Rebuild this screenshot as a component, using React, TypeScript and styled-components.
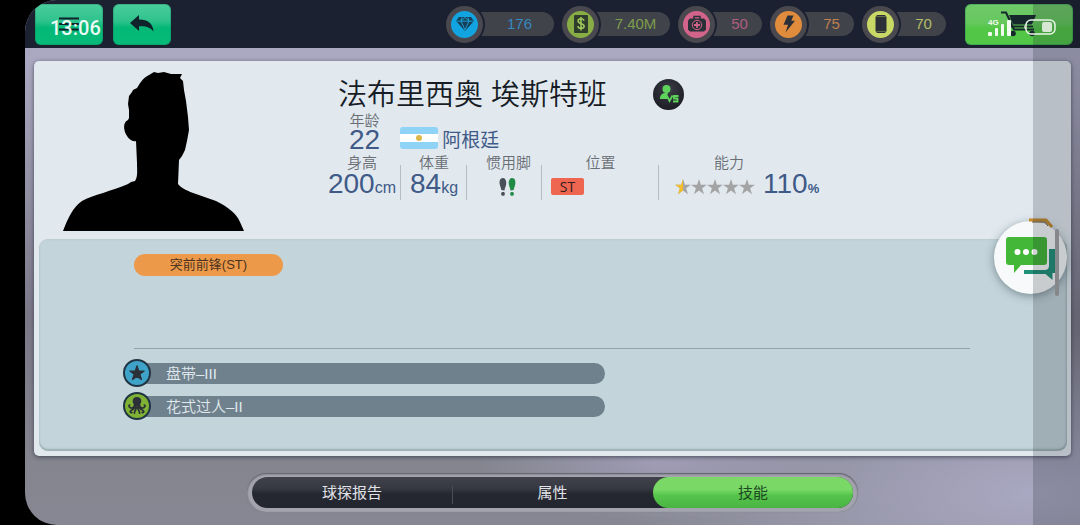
import React, { useState } from 'react';
import styled, { createGlobalStyle, css } from 'styled-components';

const GlobalStyle = createGlobalStyle`
  *, *::before, *::after { box-sizing: border-box; }
  body {
    margin: 0;
    background: #000;
    color: #20242f;
    font-family: "Liberation Sans", "Noto Sans CJK SC", sans-serif;
  }
  button { font: inherit; border: 0; padding: 0; cursor: pointer; }
  h1, dl, dd, dt, ul, p { margin: 0; padding: 0; font-weight: 400; }
  ul { list-style: none; }
  svg { display: block; flex: none; }
`;

const Device = styled.div`
  position: relative;
  min-height: 100vh;
  padding-left: 25px;
  overflow: hidden;
`;

const Screen = styled.div`
  min-height: 100vh;
  border-radius: 32px 0 0 32px;
  overflow: hidden;
  background:
    radial-gradient(ellipse 180px 60px at 60% 88%, rgba(170, 165, 195, 0.7), transparent),
    radial-gradient(ellipse 420px 160px at 96% 94%, rgba(174, 172, 200, 0.9), transparent),
    linear-gradient(180deg, #adabc5 0, #aaa8c0 12%, #7b7888 60%, #84858f 88%, #868792 100%);
`;

const Header = styled.header`
  display: flex;
  align-items: center;
  gap: 10px;
  height: 48px;
  padding: 0 7px 0 10px;
  background: #1c2131;
`;

const HeaderButton = styled.button<{ $width: number; $tone?: 'teal' | 'green' }>`
  display: flex;
  align-items: center;
  justify-content: center;
  width: ${(p) => p.$width}px;
  height: 41px;
  border-radius: 6px;
  color: #10232b;
  background: ${(p) =>
    p.$tone === 'green'
      ? 'linear-gradient(180deg, #6fc968 0, #66c85f 45%, #52c746 60%, #52c648 100%)'
      : 'linear-gradient(180deg, #4bcd9e 0, #2ec28c 42%, #03b876 58%, #07ba79 100%)'};
  box-shadow: inset 0 0 0 1px rgba(20, 120, 80, 0.3);
`;

const Resources = styled.ul`
  display: flex;
  gap: 8px;
  margin-left: auto;
  margin-right: 9px;
`;

const Resource = styled.li<{ $wide?: boolean; $color: string }>`
  display: flex;
  align-items: center;
  width: ${(p) => (p.$wide ? 108 : 84)}px;
  height: 38px;
  color: ${(p) => p.$color};
  font-size: 15px;
`;

const ResourceIcon = styled.span<{ $color: string }>`
  z-index: 1;
  flex: none;
  display: grid;
  place-items: center;
  width: 37px;
  height: 37px;
  border: 5px solid #48484e;
  border-radius: 50%;
  background: ${(p) => p.$color};
  box-shadow: 0 0 0 2px #1c2131;
`;

const ResourceValue = styled.span`
  flex: 1;
  height: 24px;
  line-height: 24px;
  margin-left: -8px;
  padding-left: 10px;
  border-radius: 0 12px 12px 0;
  background: #44464d;
  text-align: center;
  opacity: 0.92;
`;

const Main = styled.main`
  padding: 13px 9px 13px;
`;

const Card = styled.section`
  padding: 0 4px 5px 5px;
  border-radius: 5px;
  background: #e1e9ef;
  box-shadow: 0 1px 4px rgba(40, 45, 60, 0.7);
`;

const Summary = styled.div`
  display: flex;
  gap: 78px;
  height: 178px;
  padding: 11px 0 0 24px;
`;

const Info = styled.div`
  flex: 1;
  min-width: 0;
  padding-top: 4px;
`;

const NameRow = styled.div`
  display: flex;
  align-items: center;
  gap: 46px;
  height: 37px;
  padding-left: 15px;
`;

const Name = styled.h1`
  font-size: 29px;
  line-height: 38px;
  font-weight: 350;
  color: #171c26;
  white-space: nowrap;
`;

const VersusButton = styled.button`
  width: 31px;
  height: 31px;
  border-radius: 50%;
  background: radial-gradient(circle at 50% 35%, #3c3b47, #1d1e26 75%);
`;

const Label = styled.dt`
  font-size: 15px;
  line-height: 16px;
  font-weight: 350;
  color: #6a6e74;
  white-space: nowrap;
`;

const Value = styled.dd`
  display: flex;
  align-items: baseline;
  justify-content: center;
  font-size: 28px;
  line-height: 22px;
  color: #3f5a87;
`;

const Unit = styled.span<{ $small?: boolean }>`
  font-size: ${(p) => (p.$small ? 13 : 16)}px;
  font-weight: ${(p) => (p.$small ? 700 : 400)};
`;

const AgeRow = styled.div`
  display: flex;
  align-items: flex-end;
  gap: 20px;
  height: 38px;
  padding-left: 26px;
`;

const Age = styled.dl`
  text-align: center;
`;

const Nation = styled.div`
  display: flex;
  align-items: center;
  gap: 4px;
  height: 22px;
  margin-bottom: 2px;
  color: #3f5a87;
  font-size: 19px;
`;

const Flag = styled.span`
  display: grid;
  place-items: center;
  width: 38px;
  height: 22px;
  border-radius: 3px;
  background: linear-gradient(180deg, #8fd3f7 0 33%, #fff 33% 67%, #8fd3f7 67%);

  &::after {
    content: "";
    width: 6px;
    height: 6px;
    border-radius: 50%;
    background: #dcb64a;
  }
`;

const Stats = styled.dl`
  display: flex;
  padding-top: 4px;
`;

const Stat = styled.div<{ $width: number; $divided?: boolean }>`
  position: relative;
  width: ${(p) => p.$width}px;
  height: 45px;
  text-align: center;

  & > dd {
    margin-top: 2px;
  }

  ${(p) =>
    p.$divided &&
    css`
      &::after {
        content: "";
        position: absolute;
        right: 0;
        top: 10px;
        bottom: 0;
        width: 1px;
        background: #b3bdc6;
      }
    `}
`;

const FootStat = styled(Stat)`
  padding-left: 8px;
`;

const FootValue = styled.dd`
  display: flex;
  justify-content: center;
  padding: 5px 2px 0 0;
`;

const PositionValue = styled.dd`
  display: flex;
  padding: 5px 0 0 9px;
`;

const PositionTag = styled.span`
  width: 33px;
  height: 17px;
  border-radius: 2px;
  background: #ee6650;
  color: #33201f;
  font-family: "Open Sans", "Noto Sans", sans-serif;
  font-size: 14px;
  line-height: 17px;
`;

const AbilityValue = styled(Value)`
  gap: 8px;
  align-items: center;
  justify-content: flex-start;
  padding-left: 16px;
  white-space: nowrap;
`;

const Panel = styled.div`
  min-height: 212px;
  padding: 15px 97px 30px 95px;
  border-radius: 9px;
  background: #c3d4da;
  box-shadow: inset 0 -2px 2px rgba(120, 145, 145, 0.5), inset -1px 0 2px rgba(120, 145, 155, 0.3);
`;

const RoleArea = styled.div`
  height: 95px;
  border-bottom: 1px solid #93a3aa;
`;

const Role = styled.p`
  width: 149px;
  height: 22px;
  border-radius: 11px;
  background: #ec9a49;
  color: #4d3220;
  font-size: 13px;
  line-height: 22px;
  text-align: center;
`;

const Skills = styled.ul`
  display: grid;
  gap: 5px;
  padding-top: 10px;
`;

const Skill = styled.li`
  display: flex;
  align-items: center;
  width: 471px;
  max-width: 100%;
  height: 28px;
`;

const SkillIcon = styled.span<{ $color: string }>`
  z-index: 1;
  flex: none;
  display: grid;
  place-items: center;
  width: 28px;
  height: 28px;
  margin-left: -11px;
  border: 2px solid #203443;
  border-radius: 50%;
  background: ${(p) => p.$color};
`;

const SkillName = styled.span`
  flex: 1;
  height: 21px;
  margin-left: -10px;
  padding-left: 25px;
  border-radius: 0 11px 11px 0;
  background: #6f818d;
  color: #e0e9ed;
  font-size: 15px;
  font-weight: 350;
  line-height: 21px;
`;

const Tabs = styled.nav`
  display: flex;
  width: 59%;
  height: 39px;
  margin: 17px auto 0;
  padding: 4px 5px;
  border-radius: 20px;
  background: #a3a4ae;
  box-shadow: inset 0 1px 2px #55535f, 0 0 1px #7c7b88;
`;

const TabTrack = styled.div`
  display: flex;
  flex: 1;
  border-radius: 16px;
  background: linear-gradient(180deg, #40414b 0, #383a43 35%, #252730 55%, #232630 100%);
`;

const activeTab = css`
  border-radius: 16px;
  background: linear-gradient(180deg, #7cd867 0, #79d966 40%, #55c44b 60%, #4ab443 100%);
  color: #1d4a20;
`;

const idleTab = css`
  background: transparent;
  color: #e1e2e7;

  &:not(:first-child) {
    background: linear-gradient(#4c4e57, #4c4e57) 0 70% / 1px 18px no-repeat;
  }
`;

const Tab = styled.button<{ $active: boolean }>`
  flex: 1;
  font-size: 15px;
  line-height: 31px;
  ${(p) => (p.$active ? activeTab : idleTab)}
`;

const ChatButton = styled.button`
  position: absolute;
  top: 221px;
  right: 13px;
  display: grid;
  place-items: center;
  width: 73px;
  height: 73px;
  border-radius: 50%;
  background: #f7f9fb;
  box-shadow: 0 2px 8px rgba(50, 70, 80, 0.5);
`;

const HexBadge = styled.svg`
  position: absolute;
  top: 217px;
  right: 26px;
`;

const EdgeShade = styled.div`
  position: absolute;
  inset: 0 0 0 auto;
  width: 47px;
  background: rgba(20, 24, 36, 0.2);
  pointer-events: none;
`;

const ScrollThumb = styled.div`
  position: absolute;
  top: 229px;
  right: 21px;
  width: 4px;
  height: 67px;
  border-radius: 2px;
  background: #85878b;
`;

const Clock = styled.time`
  position: absolute;
  top: 16px;
  left: 50px;
  color: #e9fbf4;
  font-family: Roboto, sans-serif;
  font-size: 20px;
  font-weight: 500;
  line-height: 24px;
  pointer-events: none;
`;

const PhoneStatus = styled.div`
  position: absolute;
  top: 18px;
  right: 24px;
  display: flex;
  align-items: flex-end;
  gap: 11px;
  color: #f2fbf0;
  pointer-events: none;
`;

const Signal = styled.div`
  position: relative;
  width: 24px;
  height: 18px;
`;

const Network = styled.span`
  position: absolute;
  top: 0;
  left: 0;
  font-size: 8px;
  font-weight: 700;
  line-height: 9px;
`;

const ink = '#2b3038';

const starPoints = '8,0 9.9,5.8 16,5.8 11.1,9.3 13,15.2 8,11.6 3,15.2 4.9,9.3 0,5.8 6.1,5.8';

const DiamondIcon = () => (
  <svg width="20" height="16" viewBox="0 0 20 16">
    <path d="M4 1h12l3 4-9 10L1 5z" fill="#173f57" />
    <path d="M1.500 5.200h17M7 1.500L6 5l4 9 4-9-1-3.500M6 5l4-3.500L14 5" fill="none" stroke="#1aa5dc" strokeWidth="0.9" />
  </svg>
);

const CashIcon = () => (
  <svg width="16" height="20" viewBox="0 0 16 20">
    <rect x="1" y="1" width="14" height="18" rx="1" fill="#2f3d2d" />
    <path d="M11 6.800c-.4-1.500-1.600-2-3-2-1.700 0-2.900.8-2.900 2.300 0 3.300 6 1.800 6 5 0 1.500-1.300 2.400-3.100 2.400-1.700 0-2.900-.8-3.200-2.400M8 3v13.500" fill="none" stroke="#9fc65b" strokeWidth="1.600" />
  </svg>
);

const MedkitIcon = () => (
  <svg width="20" height="18" viewBox="0 0 20 18">
    <path d="M7 4V1.500h6V4" fill="none" stroke={ink} strokeWidth="1.500" />
    <path d="M3 3.500h14l2 2v9l-2 2H3l-2-2v-9z" fill={ink} />
    <circle cx="10" cy="10" r="4.700" fill="none" stroke="#d2648a" strokeWidth="1" />
    <path d="M10 7v6M7 10h6" stroke="#d2648a" strokeWidth="1.800" />
  </svg>
);

const BoltIcon = () => (
  <svg width="14" height="18" viewBox="0 0 14 18">
    <path d="M5.500 0.500L11.500 0.500 9.300 5.800 13 5.800 3.500 17.500 6 9.800 1.500 9.800z" fill={ink} />
  </svg>
);

const CanIcon = () => (
  <svg width="14" height="20" viewBox="0 0 14 20">
    <path d="M3 1h8l1.500 2v14L11 19H3l-1.500-2V3z" fill={ink} />
    <path d="M2.500 2.600h9M2.500 17.400h9" stroke="#8b9554" strokeWidth="0.700" />
  </svg>
);

const resources = [
  { name: '钻石', value: '176', color: '#12a4e0', text: '#3a92cc', wide: true, icon: <DiamondIcon /> },
  { name: '资金', value: '7.40M', color: '#88ad45', text: '#86a850', wide: true, icon: <CashIcon /> },
  { name: '医疗', value: '50', color: '#d2648a', text: '#bd6484', icon: <MedkitIcon /> },
  { name: '体能', value: '75', color: '#e18c3c', text: '#cc8850', icon: <BoltIcon /> },
  { name: '饮料', value: '70', color: '#c8d765', text: '#bfca6b', icon: <CanIcon /> },
];

const Silhouette = () => (
  <svg width="182" height="160" viewBox="0 0 182 160" role="img" aria-label="球员头像">
    <path d="M0 159C5 146 10 135 19 129C30 123 49 119 65 112L68 110L72 109C75 105 74 98 74 91L73 69C69 70 66 67 64 64C60 58 60 50 65 48L66 46L66 38L65 32L66 24L69 20L70 18L74 16C77 11 80 6 86 3L91 0L95 1L101 0L108 2L119 2L117 6L120 9L121 18L123 29L125 45L126 58L124 69L122 78L119 84L116 88L115 112C119 117 125 119 133 122L153 129C165 135 173 141 177 150L181 159Z" />
  </svg>
);

const FeetIcon = () => (
  <svg width="17" height="18" viewBox="0 0 17 18" role="img" aria-label="右脚">
    <g fill="#484f58">
      <path d="M4 0C1 0 .2 3 .7 6c.5 2.500 1.200 3.500 1.600 6l3.200.5C5.600 10 7.300 8 7.300 5 7.300 2 6 0 4 0z" />
      <rect x="2.300" y="14" width="3.400" height="3.700" rx="1.200" />
    </g>
    <g fill="#218a45">
      <path d="M13 0c3 0 3.800 3 3.300 6-.5 2.500-1.200 3.500-1.600 6l-3.200.5C11.400 10 9.700 8 9.700 5 9.700 2 11 0 13 0z" />
      <rect x="11.300" y="14" width="3.400" height="3.700" rx="1.200" />
    </g>
  </svg>
);

const Stars = () => (
  <svg width="80" height="16" viewBox="0 0 80 16" role="img" aria-label="半星">
    {[0, 1, 2, 3, 4].map((i) => (
      <polygon key={i} points={starPoints} fill="#a3a4a3" transform={`translate(${i * 16} 0)`} />
    ))}
    <polygon points="8,0 8,11.600 3,15.200 4.900,9.300 0,5.800 6.100,5.800" fill="#f3bd2b" />
  </svg>
);

const OctopusIcon = () => (
  <svg width="22" height="22" viewBox="0 0 22 22">
    <path d="M11 2c-3 0-4.500 2-4.300 4.500.1 1.800 1.500 2.800 1.300 5h6c-.2-2.200 1.200-3.200 1.300-5C15.500 4 14 2 11 2z" fill={ink} />
    <path d="M8.500 10.500c-.5 2.500-3 3-4.500 2-1.500-.8-1.300-2.300-.3-2.500M9 11.500c-.5 3-3 3-4.500 4.500-.7 1 .2 2 1.300 1.500M10.300 12c0 3.500-2.300 4-1.900 6.200M13.500 10.500c.5 2.500 3 3 4.500 2 1.500-.8 1.300-2.300.3-2.500M13 11.500c.5 3 3 3 4.500 4.500.7 1-.2 2-1.300 1.500M11.700 12c0 3.500 2.300 4 1.900 6.200" fill="none" stroke={ink} strokeWidth="1.700" strokeLinecap="round" />
  </svg>
);

const skills = [
  {
    name: '盘带–III',
    color: '#3fa3c9',
    icon: (
      <svg width="16" height="16" viewBox="-1 -1 18 18">
        <polygon points={starPoints} fill={ink} stroke={ink} strokeWidth="1.500" strokeLinejoin="round" />
      </svg>
    ),
  },
  { name: '花式过人–II', color: '#7fb135', icon: <OctopusIcon /> },
];

const tabs = ['球探报告', '属性', '技能'];

export default function App() {
  const [active, setActive] = useState('技能');

  return (
    <Device>
      <GlobalStyle />
      <Screen>
        <Header>
          <HeaderButton $width={68} aria-label="菜单">
            <svg width="20" height="14" viewBox="0 0 20 14">
              <path d="M0 1.500h20M0 7h20M0 12.500h20" stroke="currentColor" strokeWidth="2" />
            </svg>
          </HeaderButton>
          <HeaderButton $width={58} aria-label="返回">
            <svg width="24" height="18" viewBox="0 0 24 18">
              <path d="M9 0v4.500c8-.2 14 3.500 14.500 12C20 12 16 10.800 9 11.200V16L0 8z" fill="currentColor" />
            </svg>
          </HeaderButton>
          <Resources>
            {resources.map((r) => (
              <Resource key={r.name} $wide={r.wide} $color={r.text} aria-label={r.name}>
                <ResourceIcon $color={r.color}>{r.icon}</ResourceIcon>
                <ResourceValue>{r.value}</ResourceValue>
              </Resource>
            ))}
          </Resources>
          <HeaderButton $width={108} $tone="green" aria-label="商店">
            <svg width="38" height="26" viewBox="0 0 38 26">
              <path d="M1 1.500h5l8 17h20M11 15.500h22" fill="none" stroke="#16282b" strokeWidth="2" />
              <path d="M9 4h27l-4 9.500H13z" fill="#16282b" />
              <circle cx="13" cy="22.500" r="2.800" fill="#16282b" />
              <circle cx="32" cy="22.500" r="2.800" fill="#16282b" />
            </svg>
          </HeaderButton>
        </Header>

        <Main>
          <Card>
            <Summary>
              <Silhouette />
              <Info>
                <NameRow>
                  <Name>法布里西奥 埃斯特班</Name>
                  <VersusButton aria-label="比较球员">
                    <svg width="31" height="31" viewBox="0 0 31 31" fill="#5fd45c">
                      <circle cx="13.500" cy="10" r="4" />
                      <path d="M7 20c0-4 2-5.500 5-6h3l-1 3 1.500 3z" />
                      <path d="M14 16.500l2.500 5.500 3-5.500M25.500 17h-4.500v2.500H24.500v3h-4.500" fill="none" stroke="#5fd45c" strokeWidth="1.800" />
                    </svg>
                  </VersusButton>
                </NameRow>
                <AgeRow>
                  <Age>
                    <Label>年龄</Label>
                    <Value>22</Value>
                  </Age>
                  <Nation>
                    <Flag />
                    阿根廷
                  </Nation>
                </AgeRow>
                <Stats>
                  <Stat $width={78} $divided>
                    <Label>身高</Label>
                    <Value>200<Unit>cm</Unit></Value>
                  </Stat>
                  <Stat $width={66} $divided>
                    <Label>体重</Label>
                    <Value>84<Unit>kg</Unit></Value>
                  </Stat>
                  <FootStat $width={75} $divided>
                    <Label>惯用脚</Label>
                    <FootValue><FeetIcon /></FootValue>
                  </FootStat>
                  <Stat $width={117} $divided>
                    <Label>位置</Label>
                    <PositionValue><PositionTag>ST</PositionTag></PositionValue>
                  </Stat>
                  <Stat $width={140}>
                    <Label>能力</Label>
                    <AbilityValue>
                      <Stars />
                      <span>110<Unit $small>%</Unit></span>
                    </AbilityValue>
                  </Stat>
                </Stats>
              </Info>
            </Summary>

            <Panel>
              <RoleArea>
                <Role>突前前锋(ST)</Role>
              </RoleArea>
              <Skills>
                {skills.map((s) => (
                  <Skill key={s.name}>
                    <SkillIcon $color={s.color}>{s.icon}</SkillIcon>
                    <SkillName>{s.name}</SkillName>
                  </Skill>
                ))}
              </Skills>
            </Panel>
          </Card>

          <Tabs aria-label="球员资料">
            <TabTrack>
              {tabs.map((t) => (
                <Tab key={t} $active={t === active} onClick={() => setActive(t)}>
                  {t}
                </Tab>
              ))}
            </TabTrack>
          </Tabs>
        </Main>
      </Screen>

      <ChatButton aria-label="聊天">
        <svg width="50" height="44" viewBox="0 0 50 44">
          <path d="M43 13h6.500v24h-3v7l-7-6H18v-4h20.500q4.500 0 4.500-4.500z" fill="#219078" />
          <path d="M3 1h35q3 0 3 3v22q0 3-3 3H15l-7 8v-8H3q-3 0-3-3V4q0-3 3-3z" fill="#43b737" />
          <circle cx="11.500" cy="16" r="3" fill="#fff" />
          <circle cx="20" cy="16" r="3" fill="#fff" />
          <circle cx="28.500" cy="16" r="3" fill="#fff" />
        </svg>
      </ChatButton>
      <HexBadge width="28" height="12" viewBox="0 0 28 12">
        <path d="M3 3h17l6 7" fill="none" stroke="#c48a2c" strokeWidth="3" />
        <path d="M6 5h13l3 4" fill="none" stroke="#6c4f2a" strokeWidth="1" />
      </HexBadge>
      <EdgeShade />
      <ScrollThumb />
      <Clock>13:06</Clock>
      <PhoneStatus>
        <Signal>
          <Network>4G</Network>
          <svg width="24" height="18" viewBox="0 0 24 18" fill="currentColor">
            <rect x="0" y="14" width="4" height="4" rx="1" />
            <rect x="7" y="10" width="3" height="8" rx="1" />
            <rect x="13" y="6" width="3" height="12" rx="1" />
            <rect x="19" y="2" width="4" height="16" rx="1" />
          </svg>
        </Signal>
        <svg width="33" height="17" viewBox="0 0 33 17">
          <rect x="3" y="1" width="29" height="14" rx="5" fill="none" stroke="#e9f5e6" strokeWidth="1.500" />
          <path d="M2.500 5Q0 8 2.500 11z" fill="#e9f5e6" />
          <rect x="19" y="3" width="10" height="10" rx="2" fill="#d5e6d2" />
        </svg>
      </PhoneStatus>
    </Device>
  );
}
